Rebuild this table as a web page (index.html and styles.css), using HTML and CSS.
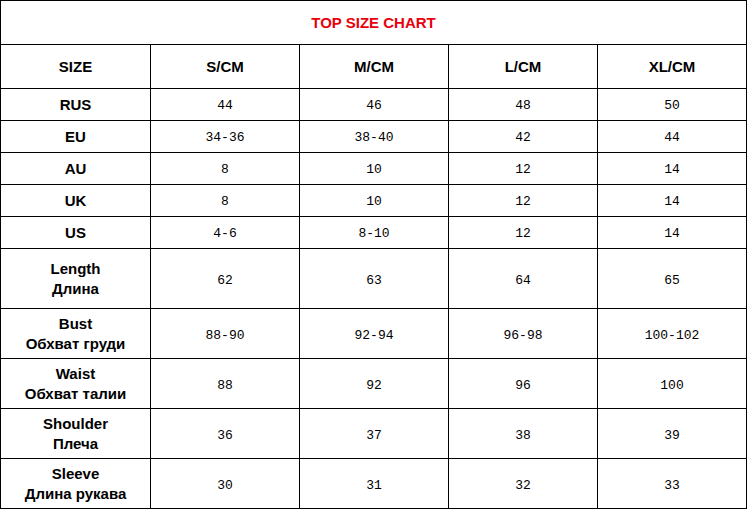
FILE: index.html
```html
<!DOCTYPE html>
<html>
<head>
<meta charset="utf-8">
<link rel="stylesheet" href="styles.css">
</head>
<body>
<table class="chart">
  <colgroup>
    <col class="c-first"><col class="c"><col class="c"><col class="c"><col class="c">
  </colgroup>
  <tr class="r-title"><td colspan="5" class="title">TOP SIZE CHART</td></tr>
  <tr class="r-head">
    <th>SIZE</th><th>S/CM</th><th>M/CM</th><th>L/CM</th><th>XL/CM</th>
  </tr>
  <tr class="r-s"><th>RUS</th><td>44</td><td>46</td><td>48</td><td>50</td></tr>
  <tr class="r-s"><th>EU</th><td>34-36</td><td>38-40</td><td>42</td><td>44</td></tr>
  <tr class="r-s"><th>AU</th><td>8</td><td>10</td><td>12</td><td>14</td></tr>
  <tr class="r-s"><th>UK</th><td>8</td><td>10</td><td>12</td><td>14</td></tr>
  <tr class="r-s"><th>US</th><td>4-6</td><td>8-10</td><td>12</td><td>14</td></tr>
  <tr class="r-xl"><th>Length<br>Длина</th><td>62</td><td>63</td><td>64</td><td>65</td></tr>
  <tr class="r-l"><th>Bust<br>Обхват груди</th><td>88-90</td><td>92-94</td><td>96-98</td><td>100-102</td></tr>
  <tr class="r-l"><th>Waist<br>Обхват талии</th><td>88</td><td>92</td><td>96</td><td>100</td></tr>
  <tr class="r-l"><th>Shoulder<br>Плеча</th><td>36</td><td>37</td><td>38</td><td>39</td></tr>
  <tr class="r-l"><th>Sleeve<br>Длина рукава</th><td>30</td><td>31</td><td>32</td><td>33</td></tr>
</table>
</body>
</html>
```
FILE: styles.css
```css
html, body {
  margin: 0;
  padding: 0;
  background: #fff;
}
.chart {
  border-collapse: collapse;
  table-layout: fixed;
  width: 746px;
  margin: 0;
}
.c-first { width: 150px; }
.c { width: 149px; }
.chart th, .chart td {
  border: 1px solid #000;
  padding: 0;
  text-align: center;
  vertical-align: middle;
}
.chart th {
  font-family: "Liberation Sans", Arial, sans-serif;
  font-weight: bold;
  font-size: 15px;
  line-height: 20px;
  color: #000;
}
.chart td {
  font-family: "Liberation Mono", "Courier New", monospace;
  font-size: 13px;
  color: #000;
  padding-top: 2px;
}
.r-xl td, .r-l td {
  padding-top: 4px;
}
.chart td.title {
  font-family: "Liberation Sans", Arial, sans-serif;
  font-weight: bold;
  font-size: 15px;
  color: #e8000b;
  padding-top: 0;
}
.r-title { height: 44px; }
.r-head { height: 44px; }
.r-s { height: 32px; }
.r-xl { height: 60px; }
.r-l { height: 50px; }
```
